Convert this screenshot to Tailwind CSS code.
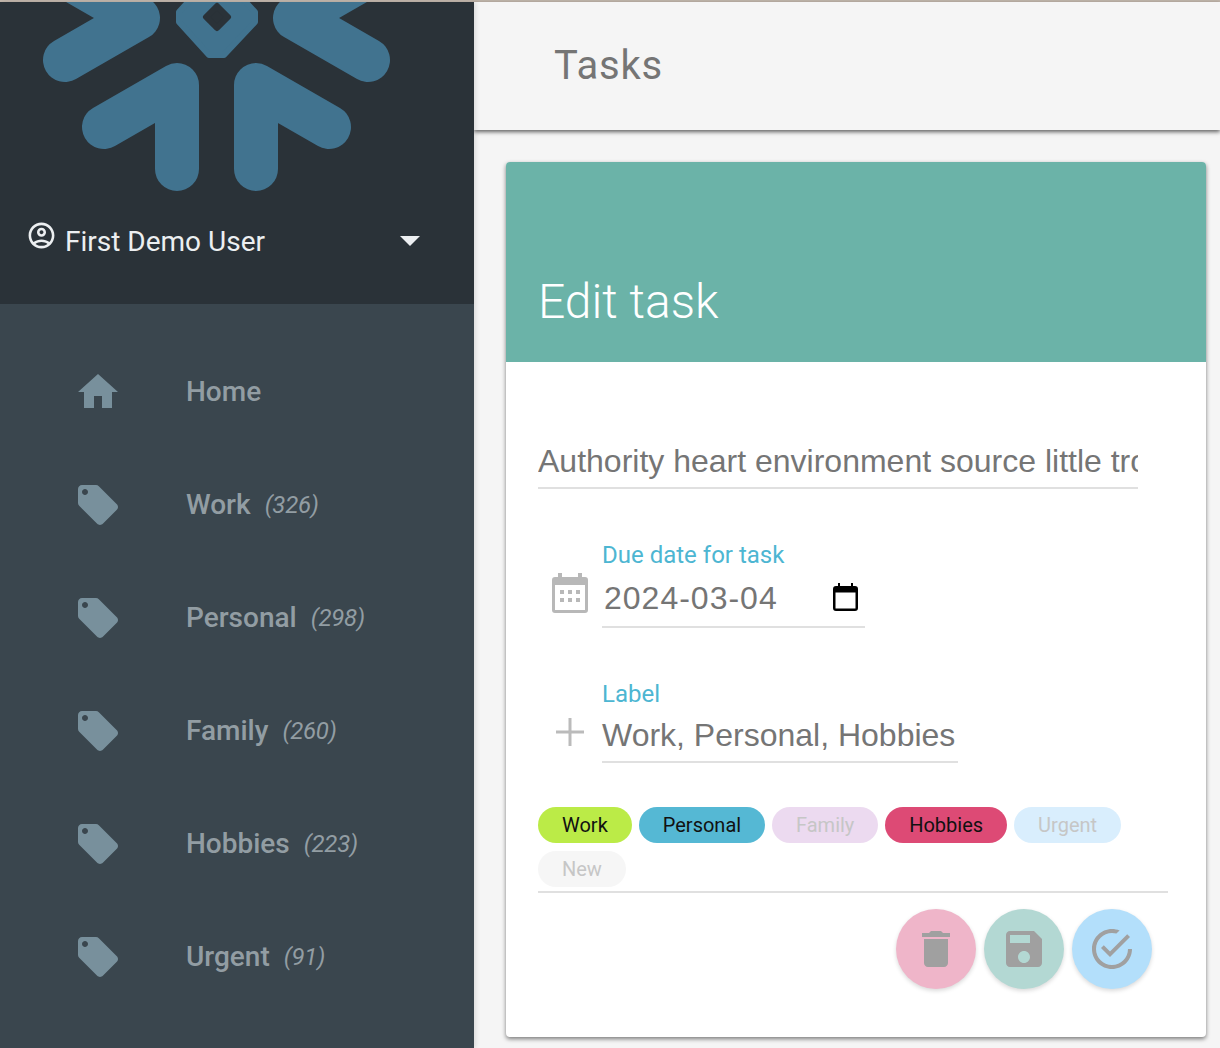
<!DOCTYPE html>
<html lang="en">
<head>
  <meta charset="UTF-8">
  <title>Tasks</title>
  <script src="https://cdn.jsdelivr.net/npm/@tailwindcss/browser@4"></script>
</head>
<body class="h-[1048px] overflow-hidden bg-[#f5f5f5] font-['Roboto',sans-serif]">
  <div class="h-[2px] bg-[#c0b5aa]"></div>
  <div class="flex h-[1046px]">

    <!-- sidebar -->
    <aside class="relative z-10 w-[474px] shrink-0 bg-[#3a464e] overflow-hidden shadow-[2px_0_4px_rgba(0,0,0,0.1)]">
      <div class="h-[302px] bg-[#2a3238]">
        <svg class="block" width="474" height="196" viewBox="0 2 474 196" fill="none">
          <g stroke="#41738f" stroke-width="44" stroke-linecap="round" stroke-linejoin="round">
            <path d="M177 169V85L104 127"/>
            <path d="M256 169V85L329 127"/>
            <path d="M65 60L138 18L65 -24"/>
            <path d="M368 60L295 18L368 -24"/>
          </g>
          <path d="M179 12V22L209 55H224L255 22V12L224 -21H209Z" fill="#41738f" stroke="#41738f" stroke-width="6" stroke-linejoin="round"/>
          <path d="M206 17L217 6L228 17L217 28Z" fill="#2a3238" stroke="#2a3238" stroke-width="6" stroke-linejoin="round"/>
        </svg>
        <div class="flex items-center h-[88px] pl-[26px] pr-[54px] text-[#eceff1]">
          <svg class="w-[31px] h-[31px] -mt-[14px]" viewBox="0 0 24 24" fill="#eceff1"><path d="M12 2C6.48 2 2 6.48 2 12s4.48 10 10 10 10-4.48 10-10S17.52 2 12 2zM7.35 18.5C8.66 17.56 10.26 17 12 17s3.34.56 4.65 1.5c-1.31.94-2.91 1.5-4.65 1.5s-3.34-.56-4.65-1.5zm10.79-1.38C16.45 15.8 14.32 15 12 15s-4.45.8-6.14 2.12C4.7 15.73 4 13.95 4 12c0-4.42 3.58-8 8-8s8 3.58 8 8c0 1.95-.7 3.73-1.86 5.12zM12 6c-1.93 0-3.5 1.57-3.5 3.5S10.07 13 12 13s3.5-1.57 3.5-3.5S13.93 6 12 6zm0 5c-.83 0-1.5-.67-1.5-1.5S11.17 8 12 8s1.5.67 1.5 1.5S12.83 11 12 11z"/></svg>
          <span class="ml-2 text-[28px] leading-none">First Demo User</span>
          <span class="ml-auto -mt-[3px] w-0 h-0 border-x-[10px] border-x-transparent border-t-[10px] border-t-[#eceff1]"></span>
        </div>
      </div>

      <nav class="pt-[31px] text-[#929da3]">
        <a class="flex items-center h-[113px] pl-[74px]">
          <svg class="w-[48px] h-[48px]" viewBox="0 0 24 24" fill="#78909c"><path d="M10 20v-6h4v6h5v-8h3L12 3 2 12h3v8z"/></svg>
          <span class="ml-[64px] text-[28px] font-medium">Home</span>
        </a>
        <a class="flex items-center h-[113px] pl-[74px]">
          <svg class="w-[48px] h-[48px]" viewBox="0 0 24 24" fill="#78909c"><path d="M21.41 11.58l-9-9C12.05 2.22 11.55 2 11 2H4c-1.1 0-2 .9-2 2v7c0 .55.22 1.05.59 1.42l9 9c.36.36.86.58 1.41.58.55 0 1.05-.22 1.41-.59l7-7c.37-.36.59-.86.59-1.41 0-.55-.23-1.06-.59-1.42zM5.5 7C4.67 7 4 6.33 4 5.5S4.67 4 5.5 4 7 4.67 7 5.5 6.33 7 5.5 7z"/></svg>
          <span class="ml-[64px] text-[28px] font-medium">Work</span>
          <span class="ml-[14px] text-[24px] italic tracking-[-0.25px]">(326)</span>
        </a>
        <a class="flex items-center h-[113px] pl-[74px]">
          <svg class="w-[48px] h-[48px]" viewBox="0 0 24 24" fill="#78909c"><path d="M21.41 11.58l-9-9C12.05 2.22 11.55 2 11 2H4c-1.1 0-2 .9-2 2v7c0 .55.22 1.05.59 1.42l9 9c.36.36.86.58 1.41.58.55 0 1.05-.22 1.41-.59l7-7c.37-.36.59-.86.59-1.41 0-.55-.23-1.06-.59-1.42zM5.5 7C4.67 7 4 6.33 4 5.5S4.67 4 5.5 4 7 4.67 7 5.5 6.33 7 5.5 7z"/></svg>
          <span class="ml-[64px] text-[28px] font-medium">Personal</span>
          <span class="ml-[14px] text-[24px] italic tracking-[-0.25px]">(298)</span>
        </a>
        <a class="flex items-center h-[113px] pl-[74px]">
          <svg class="w-[48px] h-[48px]" viewBox="0 0 24 24" fill="#78909c"><path d="M21.41 11.58l-9-9C12.05 2.22 11.55 2 11 2H4c-1.1 0-2 .9-2 2v7c0 .55.22 1.05.59 1.42l9 9c.36.36.86.58 1.41.58.55 0 1.05-.22 1.41-.59l7-7c.37-.36.59-.86.59-1.41 0-.55-.23-1.06-.59-1.42zM5.5 7C4.67 7 4 6.33 4 5.5S4.67 4 5.5 4 7 4.67 7 5.5 6.33 7 5.5 7z"/></svg>
          <span class="ml-[64px] text-[28px] font-medium">Family</span>
          <span class="ml-[14px] text-[24px] italic tracking-[-0.25px]">(260)</span>
        </a>
        <a class="flex items-center h-[113px] pl-[74px]">
          <svg class="w-[48px] h-[48px]" viewBox="0 0 24 24" fill="#78909c"><path d="M21.41 11.58l-9-9C12.05 2.22 11.55 2 11 2H4c-1.1 0-2 .9-2 2v7c0 .55.22 1.05.59 1.42l9 9c.36.36.86.58 1.41.58.55 0 1.05-.22 1.41-.59l7-7c.37-.36.59-.86.59-1.41 0-.55-.23-1.06-.59-1.42zM5.5 7C4.67 7 4 6.33 4 5.5S4.67 4 5.5 4 7 4.67 7 5.5 6.33 7 5.5 7z"/></svg>
          <span class="ml-[64px] text-[28px] font-medium">Hobbies</span>
          <span class="ml-[14px] text-[24px] italic tracking-[-0.25px]">(223)</span>
        </a>
        <a class="flex items-center h-[113px] pl-[74px]">
          <svg class="w-[48px] h-[48px]" viewBox="0 0 24 24" fill="#78909c"><path d="M21.41 11.58l-9-9C12.05 2.22 11.55 2 11 2H4c-1.1 0-2 .9-2 2v7c0 .55.22 1.05.59 1.42l9 9c.36.36.86.58 1.41.58.55 0 1.05-.22 1.41-.59l7-7c.37-.36.59-.86.59-1.41 0-.55-.23-1.06-.59-1.42zM5.5 7C4.67 7 4 6.33 4 5.5S4.67 4 5.5 4 7 4.67 7 5.5 6.33 7 5.5 7z"/></svg>
          <span class="ml-[64px] text-[28px] font-medium">Urgent</span>
          <span class="ml-[14px] text-[24px] italic tracking-[-0.25px]">(91)</span>
        </a>
      </nav>
    </aside>

    <!-- main -->
    <main class="flex-1 min-w-0">
      <header class="flex items-center h-[128px] pl-[80px] bg-[#f5f5f5] shadow-[0_2px_4px_rgba(0,0,0,0.6)]">
        <h1 class="text-[40px] tracking-[0.8px] text-[#757575]">Tasks</h1>
      </header>

      <div class="pt-[32px] pl-[32px]">
        <section class="w-[700px] h-[875px] bg-white rounded-[4px] shadow-[0_2px_4px_rgba(0,0,0,0.5)]">
          <div class="flex items-end h-[200px] pl-[32px] pb-[36px] bg-[#6bb3a8] rounded-t-[4px]">
            <h2 class="text-[48px] leading-none font-light text-white">Edit task</h2>
          </div>

          <div class="px-[32px] pt-[68px] font-['Liberation_Sans',sans-serif] text-[#757575]">
            <div class="w-[600px] h-[59px] border-b-2 border-[#e0e0e0] overflow-hidden whitespace-nowrap text-[32px] leading-[63px]">Authority heart environment source little trouble</div>

            <!-- due date -->
            <div class="flex mt-[52px]">
              <svg class="w-[36px] h-[40px] ml-[14px] mt-[32px]" viewBox="0 0 36 40" fill="#b8b8b8">
                <path d="M6 0h4v4h16V0h4v4h3a3 3 0 0 1 3 3v30a3 3 0 0 1-3 3H3a3 3 0 0 1-3-3V7a3 3 0 0 1 3-3h3z"/>
                <rect x="3" y="12" width="30" height="25" fill="#fff"/>
                <g><rect x="8" y="17" width="4" height="4"/><rect x="16" y="17" width="4" height="4"/><rect x="24" y="17" width="4" height="4"/><rect x="8" y="25" width="4" height="4"/><rect x="16" y="25" width="4" height="4"/><rect x="24" y="25" width="4" height="4"/></g>
              </svg>
              <div class="ml-[14px] w-[263px]">
                <label class="block font-['Roboto',sans-serif] text-[24px] leading-[28px] text-[#4db6d2]">Due date for task</label>
                <div class="flex items-center justify-between h-[59px] pt-[1px] border-b-2 border-[#e0e0e0] pl-[2px] pr-[7px]">
                  <span class="text-[32px] tracking-[1px]">2024-03-04</span>
                  <svg class="w-[25px] h-[28px] -mt-[3px]" viewBox="0 0 25 28" fill="#000"><path d="M5 0h2v3h11V0h2v3h2a3 3 0 0 1 3 3v19a3 3 0 0 1-3 3H3a3 3 0 0 1-3-3V6a3 3 0 0 1 3-3h2zM2.500 9.500V25.500H22.500V9.500z"/></svg>
                </div>
              </div>
            </div>

            <!-- label -->
            <div class="flex mt-[52px]">
              <svg class="w-[30px] h-[30px] ml-[17px] mt-[37px]" viewBox="0 0 30 30" fill="#bbb"><path d="M13.500 1h3v12.500H29v3H16.500V29h-3V16.500H1v-3h12.500z"/></svg>
              <div class="ml-[17px]">
                <label class="block font-['Roboto',sans-serif] text-[24px] leading-[28px] text-[#4db6d2]">Label</label>
                <div class="flex items-center w-[356px] h-[55px] border-b-2 border-[#e0e0e0] whitespace-nowrap text-[32px]">Work, Personal, Hobbies</div>
              </div>
            </div>

            <!-- chips -->
            <div class="flex flex-wrap gap-x-[7px] gap-y-[8px] w-[630px] mt-[44px] pb-[4px] border-b-2 border-[#e0e0e0] font-['Roboto',sans-serif] text-[20px]">
              <span class="flex items-center h-[36px] px-[24px] rounded-full bg-[#bbeb47] text-[#111]">Work</span>
              <span class="flex items-center h-[36px] px-[24px] rounded-full bg-[#55b8d4] text-[#111]">Personal</span>
              <span class="flex items-center justify-center w-[106px] h-[36px] rounded-full bg-[#ecdaf0] text-[#c6c6c6]">Family</span>
              <span class="flex items-center h-[36px] px-[24px] rounded-full bg-[#dd4a75] text-[#111]">Hobbies</span>
              <span class="flex items-center h-[36px] px-[24px] rounded-full bg-[#d9eefd] text-[#c6c6c6]">Urgent</span>
              <span class="flex items-center h-[36px] px-[24px] rounded-full bg-[#f6f6f6] text-[#c6c6c6]">New</span>
            </div>

            <!-- actions -->
            <div class="flex justify-end gap-[8px] w-[614px] mt-[16px]">
              <button class="flex items-center justify-center w-[80px] h-[80px] rounded-full bg-[#efb5c9] shadow-[0_2px_4px_rgba(0,0,0,0.15)]">
                <svg class="w-[48px] h-[48px]" viewBox="0 0 24 24" fill="#a0a0a0"><path d="M6 19c0 1.100.9 2 2 2h8c1.100 0 2-.9 2-2V7H6v12zM19 4h-3.500l-1-1h-5l-1 1H5v2h14V4z"/></svg>
              </button>
              <button class="flex items-center justify-center w-[80px] h-[80px] rounded-full bg-[#b3d8d3] shadow-[0_2px_4px_rgba(0,0,0,0.15)]">
                <svg class="w-[48px] h-[48px]" viewBox="0 0 24 24" fill="#a0a0a0"><path d="M17 3H5c-1.110 0-2 .9-2 2v14c0 1.100.89 2 2 2h14c1.100 0 2-.9 2-2V7l-4-4zm-5 16c-1.660 0-3-1.340-3-3s1.340-3 3-3 3 1.340 3 3-1.340 3-3 3zm3-10H5V5h10v4z"/></svg>
              </button>
              <button class="flex items-center justify-center w-[80px] h-[80px] rounded-full bg-[#b3dffb] shadow-[0_2px_4px_rgba(0,0,0,0.15)]">
                <svg class="w-[48px] h-[48px]" viewBox="0 0 24 24" fill="#a0a0a0"><path d="M7.900 10.100l-1.400 1.400L11 16 21 6l-1.400-1.400-8.600 8.600-3.100-3.100zM20 12c0 4.400-3.600 8-8 8s-8-3.600-8-8 3.600-8 8-8c.8 0 1.500.1 2.200.3l1.600-1.600C14.600 2.300 13.300 2 12 2 6.500 2 2 6.500 2 12s4.500 10 10 10 10-4.500 10-10h-2z"/></svg>
              </button>
            </div>
          </div>
        </section>
      </div>
    </main>
  </div>
</body>
</html>
